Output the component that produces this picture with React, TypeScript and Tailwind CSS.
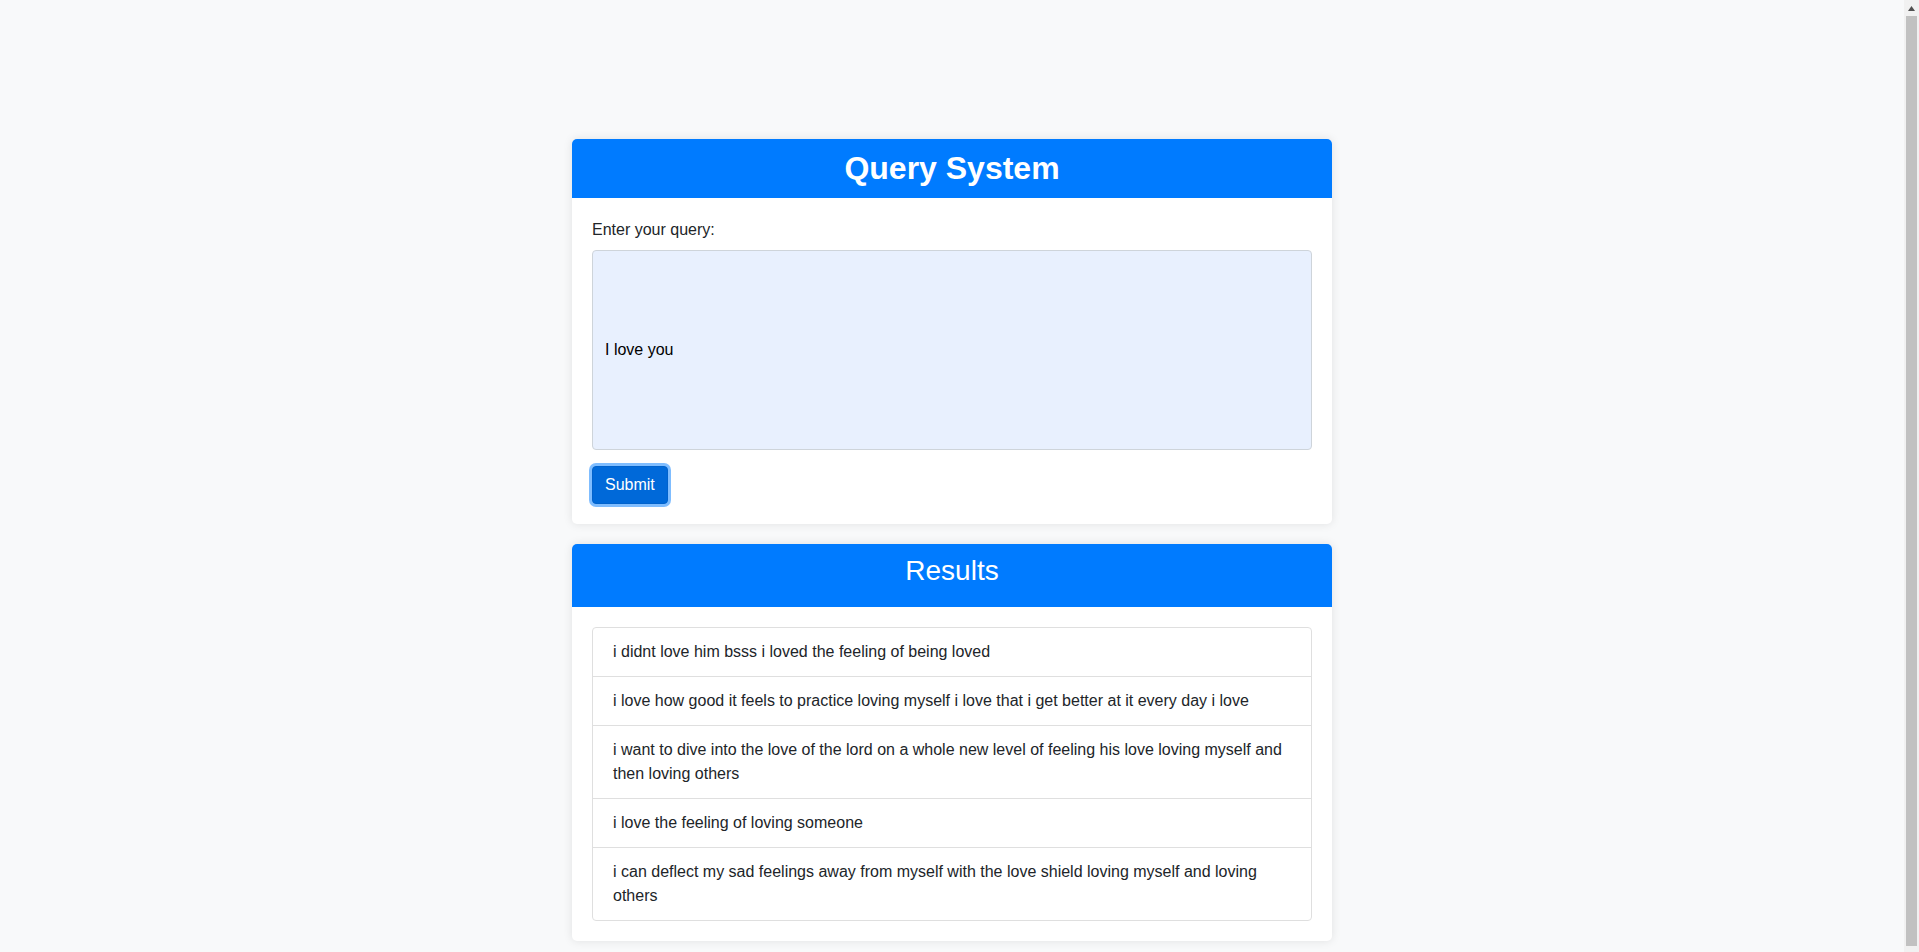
const results = [
  'i didnt love him bsss i loved the feeling of being loved',
  'i love how good it feels to practice loving myself i love that i get better at it every day i love',
  'i want to dive into the love of the lord on a whole new level of feeling his love loving myself and then loving others',
  'i love the feeling of loving someone',
  'i can deflect my sad feelings away from myself with the love shield loving myself and loving others',
];

function Scrollbar() {
  return (
    <div className="flex w-[15px] shrink-0 flex-col bg-[#f1f1f1]">
      <div className="flex h-4 items-center justify-center">
        <svg width="7" height="5" viewBox="0 0 7 5">
          <polygon points="3.5,0 7,5 0,5" fill="#505050" />
        </svg>
      </div>
      <div className="mx-[2px] h-[930px] bg-[#c1c1c1]" />
    </div>
  );
}

export default function App() {
  return (
    <div className="flex h-screen overflow-hidden bg-[#f8f9fa] font-['Liberation_Sans',Arial,sans-serif] text-[#212529]">
      <main className="flex-1">
        <div className="mx-auto w-[760px] pt-[139px] pb-5">
          <div className="overflow-hidden rounded-[5px] bg-white shadow-[0_0_10px_rgba(0,0,0,0.1)]">
            <div className="bg-[#007bff] pt-[10px] pb-[11px] text-center">
              <h2 className="text-[32px] font-bold leading-[1.2] text-white">Query System</h2>
            </div>
            <div className="p-5">
              <label className="mb-2 block text-base leading-6">Enter your query:</label>
              <input
                type="text"
                defaultValue="I love you"
                className="block h-[200px] w-full rounded-[4px] border border-[#ced4da] bg-[#e8f0fe] px-3 text-base text-black outline-none"
              />
              <button className="mt-4 rounded-[4px] border border-[#0062cc] bg-[#0069d9] px-3 py-[6px] text-base leading-6 text-white shadow-[0_0_0_3px_rgba(0,123,255,0.5)]">
                Submit
              </button>
            </div>
          </div>

          <div className="mt-5 overflow-hidden rounded-[5px] bg-white shadow-[0_0_10px_rgba(0,0,0,0.1)]">
            <div className="bg-[#007bff] py-[10px] text-center">
              <h3 className="mb-[9px] text-[28px] font-normal leading-[1.2] text-white">Results</h3>
            </div>
            <div className="p-5">
              <ul className="rounded-[4px] border border-[#dfdfdf]">
                {results.map((text, i) => (
                  <li
                    key={i}
                    className={`px-5 py-3 text-base leading-6 ${i > 0 ? 'border-t border-[#dfdfdf]' : ''}`}
                  >
                    {text}
                  </li>
                ))}
              </ul>
            </div>
          </div>
        </div>
      </main>
      <Scrollbar />
    </div>
  );
}
